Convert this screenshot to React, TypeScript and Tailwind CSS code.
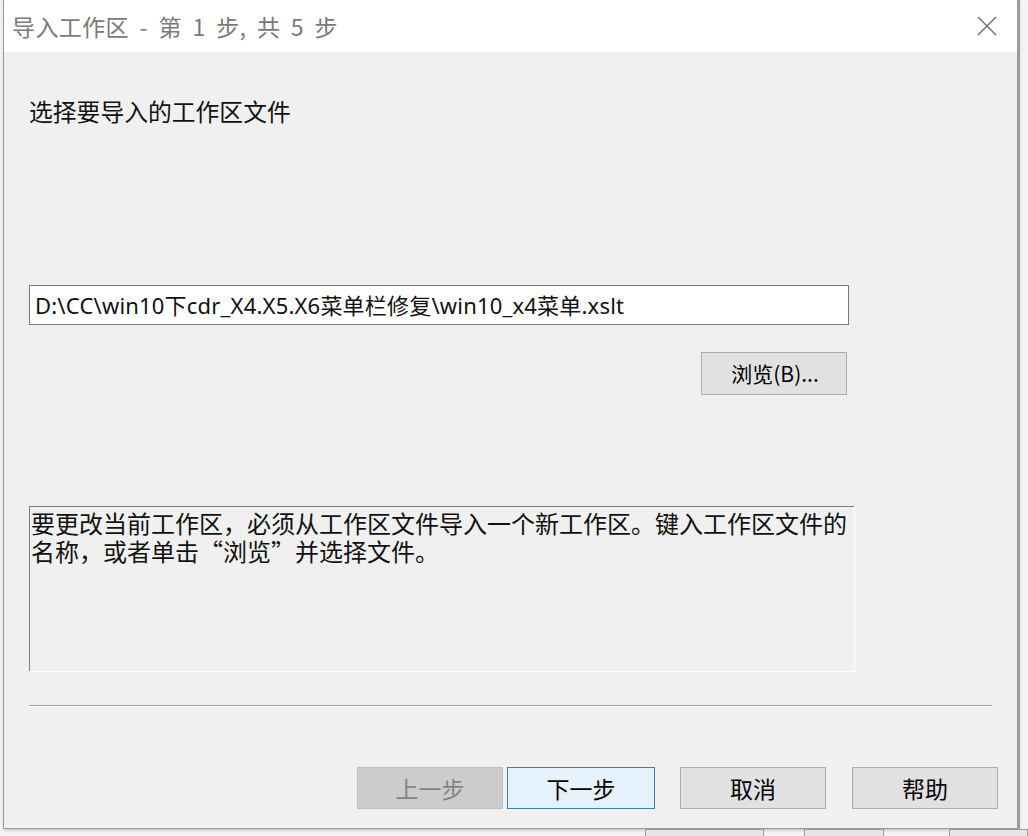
const cjk = { fontFamily: '"Noto Sans CJK SC", "Noto Sans", sans-serif' };
const latin = { fontFamily: '"Noto Sans", "Noto Sans CJK SC", sans-serif' };

type BtnProps = {
  label: string;
  variant?: 'default' | 'primary' | 'disabled';
  className?: string;
};

const DialogButton = ({ label, variant = 'default', className = '' }: BtnProps) => {
  const tone =
    variant === 'primary'
      ? 'bg-[#e5f1fb] border-[#3c7fb1] text-black'
      : variant === 'disabled'
      ? 'bg-[#cccccc] border-[#bfbfbf] text-[#838383]'
      : 'bg-[#e1e1e1] border-[#adadad] text-black';
  return (
    <div
      className={`flex h-[42px] w-[146px] items-center justify-center border text-[23px] leading-none ${tone} ${className}`}
      style={cjk}
    >
      {label}
    </div>
  );
};

const App = () => {
  return (
    <div className="relative h-[836px] w-[1028px] overflow-hidden bg-[#f3f3f3]">
      <div className="flex h-[829px] w-[1020px] pl-[3px]">
        {/* dialog */}
        <div className="flex h-full w-[1018px] flex-col border-x border-b border-[#9a9a9a] bg-[#f0f0f0] shadow-[1px_1px_3px_rgba(0,0,0,0.25)]">
          {/* title bar */}
          <div className="flex h-[52px] shrink-0 items-center justify-between bg-white pl-[8px] pr-[20px]">
            <span
              className="whitespace-nowrap text-[23px] tracking-[0.4px] text-[#7a7a7a] [word-spacing:5px]"
              style={cjk}
            >
              导入工作区 - 第 1 步, 共 5 步
            </span>
            <svg width="20" height="20" viewBox="0 0 20 20" className="mb-[1px]">
              <path d="M1 1 L19 19 M19 1 L1 19" stroke="#6b6b6b" strokeWidth="1.4" />
            </svg>
          </div>

          {/* body */}
          <div className="flex flex-1 flex-col pl-[25px]">
            <div className="mt-[46px] text-[23.8px] leading-[26px] text-[#111]" style={cjk}>
              选择要导入的工作区文件
            </div>

            <div
              className="mt-[161px] flex h-[40px] w-[820px] items-center whitespace-nowrap border border-[#7a7a7a] bg-white pl-[5px] text-[22px] tracking-[0.2px] text-[#111]"
              style={latin}
            >
              D:\CC\win10下cdr_X4.X5.X6菜单栏修复\win10_x4菜单.xslt
            </div>

            <div className="mt-[27px] flex w-[818px] justify-end">
              <div
                className="flex h-[43px] w-[146px] items-center justify-center border border-[#adadad] bg-[#e1e1e1] pl-[2px] text-[21px] text-black"
                style={cjk}
              >
                浏览(B)...
              </div>
            </div>

            <div
              className="mt-[111px] h-[165px] w-[825px] whitespace-nowrap border-l border-t border-[#7d7d7d] shadow-[1px_1px_0_#ffffff] pl-[1px] pt-[2px] text-[24px] leading-[28px] text-[#111]"
              style={cjk}
            >
              <div>要更改当前工作区，必须从工作区文件导入一个新工作区。键入工作区文件的</div>
              <div>名称，或者单击“浏览”并选择文件。</div>
            </div>

            <div className="mt-[34px] h-[2px] w-[963px] border-t border-[#a0a0a0] bg-white" />

            <div className="mt-[60px] flex">
              <DialogButton label="上一步" variant="disabled" className="ml-[328px]" />
              <DialogButton label="下一步" variant="primary" className="ml-[4px] w-[148px]" />
              <DialogButton label="取消" className="ml-[25px]" />
              <DialogButton label="帮助" className="ml-[26px]" />
            </div>
          </div>
        </div>
        <div className="h-full w-[2px] bg-[#9c9c9c]" />
      </div>

      {/* background window peeking out below */}
      <div className="flex h-[7px] w-full">
        <div className="ml-[645px] h-full w-[120px] border-x border-t border-[#9a9a9a] bg-[#e6e6e6]" />
        <div className="ml-[40px] h-full w-[80px] border-x border-t border-[#9a9a9a] bg-[#e6e6e6]" />
        <div className="ml-[65px] h-full w-[80px] border-x border-t border-[#9a9a9a] bg-[#e6e6e6]" />
      </div>
    </div>
  );
};

export default App;
